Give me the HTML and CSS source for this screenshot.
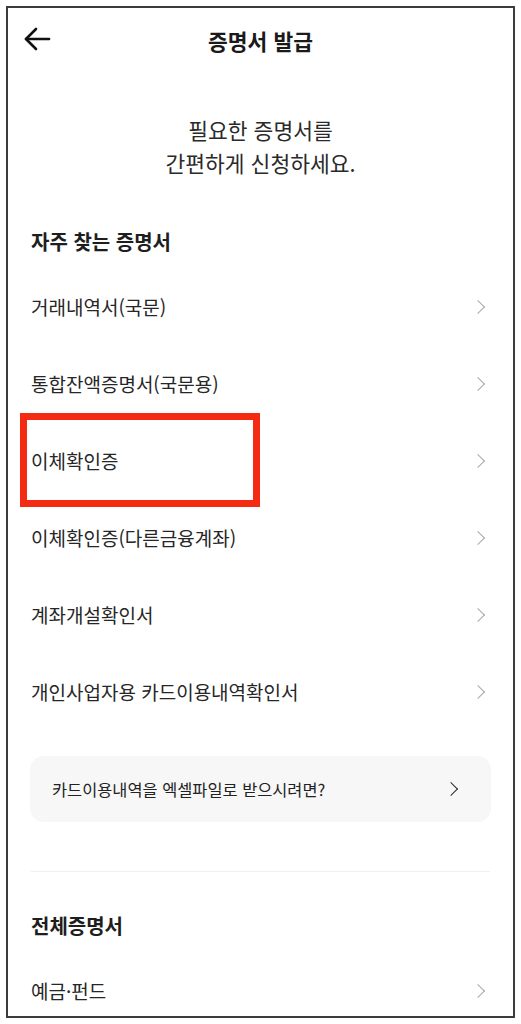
FILE: index.html
```html
<!DOCTYPE html>
<html lang="ko">
<head>
    <meta charset="UTF-8">
    <meta name="viewport" content="width=device-width, initial-scale=1.0">
    <title>증명서 발급</title>
    <link rel="stylesheet" href="styles.css">
</head>
<body>
    <div class="frame">
        <div class="header">
            <button class="back-btn" aria-label="뒤로">
                <svg width="28" height="28" viewBox="0 0 28 28" fill="none" stroke="#111" stroke-width="2.6" stroke-linecap="round" stroke-linejoin="round">
                    <path d="M26 14H3"/>
                    <path d="M13 4L3 14l10 10"/>
                </svg>
            </button>
            <h1 class="title">증명서 발급</h1>
        </div>

        <p class="intro">필요한 증명서를<br>간편하게 신청하세요.</p>

        <h2 class="section-title">자주 찾는 증명서</h2>
        <ul class="cert-list">
            <li class="cert-item">거래내역서(국문)<span class="chevron"></span></li>
            <li class="cert-item">통합잔액증명서(국문용)<span class="chevron"></span></li>
            <li class="cert-item highlighted">이체확인증<span class="chevron"></span><span class="mark"></span></li>
            <li class="cert-item">이체확인증(다른금융계좌)<span class="chevron"></span></li>
            <li class="cert-item">계좌개설확인서<span class="chevron"></span></li>
            <li class="cert-item">개인사업자용 카드이용내역확인서<span class="chevron"></span></li>
        </ul>

        <div class="notice-card">
            <span>카드이용내역을 엑셀파일로 받으시려면?</span>
            <span class="chevron dark"></span>
        </div>

        <hr class="divider">

        <h2 class="section-title all">전체증명서</h2>
        <ul class="cert-list">
            <li class="cert-item">예금·펀드<span class="chevron"></span></li>
        </ul>
    </div>
</body>
</html>
```

FILE: styles.css
```css
* {
    box-sizing: border-box;
    margin: 0;
    padding: 0;
}

body {
    font-family: 'Noto Sans CJK KR', 'Noto Sans', sans-serif;
    background-color: #ffffff;
    color: #222222;
}

.frame {
    margin: 6px;
    height: 1012px;
    border: 2px solid #3c3c3c;
    padding: 0 23px;
    overflow: hidden;
}

.header {
    position: relative;
    height: 64px;
    display: flex;
    align-items: center;
    justify-content: center;
}

.back-btn {
    position: absolute;
    left: -8px;
    top: 17px;
    background: none;
    border: none;
    width: 28px;
    height: 28px;
}

.title {
    font-size: 21.5px;
    font-weight: 700;
    color: #1a1a1a;
}

.intro {
    margin-top: 41px;
    text-align: center;
    font-size: 21.5px;
    line-height: 33px;
    color: #2a2a2a;
}

.section-title {
    margin-top: 50px;
    font-size: 20px;
    line-height: 26px;
    font-weight: 700;
    color: #1e1e1e;
}

.section-title.all {
    margin-top: 41px;
}

.cert-list {
    list-style: none;
    margin-top: 13px;
}

.cert-item {
    position: relative;
    height: 77px;
    display: flex;
    align-items: center;
    justify-content: space-between;
    font-size: 19px;
    color: #262626;
    padding-right: 4px;
}

.chevron {
    width: 10px;
    height: 10px;
    border-top: 1.3px solid #a8a8a8;
    border-right: 1.3px solid #a8a8a8;
    transform: rotate(45deg);
    margin-right: 3px;
}

.chevron.dark {
    width: 10px;
    height: 10px;
    border-color: #2a2a2a;
    border-width: 1.6px;
}

.mark {
    position: absolute;
    left: -11px;
    top: -9px;
    width: 240px;
    height: 94px;
    border: 7px solid #f52a12;
}

.notice-card {
    margin-top: 26px;
    margin-right: -1px;
    margin-left: -1px;
    height: 66px;
    border-radius: 14px;
    background-color: #f7f7f7;
    display: flex;
    align-items: center;
    justify-content: space-between;
    padding: 0 32px 0 22px;
    font-size: 16.4px;
    color: #222222;
}

.divider {
    margin-top: 49px;
    border: none;
    border-top: 1px solid #efefef;
}
```
